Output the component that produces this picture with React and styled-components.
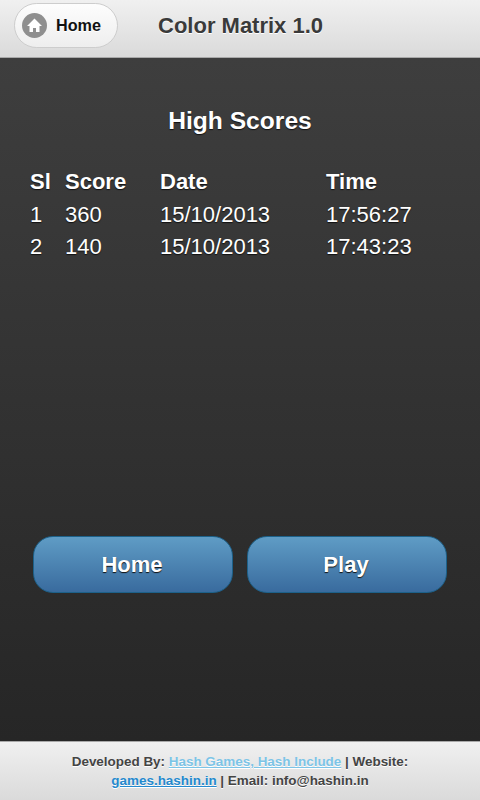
import React from "react";
import styled, { createGlobalStyle } from "styled-components";

const Global = createGlobalStyle`
  html, body { margin: 0; padding: 0; height: 100%; }
  body { font-family: "Liberation Sans", Arial, sans-serif; }
  #root { height: 100%; }
`;

const Page = styled.div`
  display: flex;
  flex-direction: column;
  width: 480px;
  height: 800px;
  overflow: hidden;
`;

const Header = styled.header`
  box-sizing: border-box;
  height: 58px;
  display: flex;
  align-items: center;
  padding: 0 0 7px 14px;
  background: linear-gradient(#f0f0f0, #dadada);
  border-bottom: 1px solid #a9a9a9;
`;

const BackButton = styled.a`
  box-sizing: border-box;
  width: 104px;
  height: 45px;
  display: flex;
  align-items: center;
  gap: 9px;
  padding-left: 7px;
  border: 1px solid #cdcdcd;
  border-radius: 23px;
  background: linear-gradient(#fdfdfd, #eeeeee);
  color: #111;
  font-size: 16.2px;
  font-weight: bold;
  text-shadow: 0 1px 0 #fff;
`;

const IconDisc = styled.span`
  width: 25px;
  height: 25px;
  border-radius: 50%;
  background: #8f8f8f;
  display: flex;
  align-items: center;
  justify-content: center;
`;

const Title = styled.h1`
  margin: 2px 0 0 40px;
  font-size: 22px;
  font-weight: bold;
  color: #3a3a3a;
  text-shadow: 0 1px 0 #fff;
`;

const Main = styled.main`
  flex: 1;
  display: flex;
  flex-direction: column;
  background: linear-gradient(#3e3e3e, #262626);
  color: #fff;
  text-shadow: 0 1px 1px #111;
`;

const Heading = styled.h2`
  margin: 48px 0 0;
  text-align: center;
  font-size: 24.6px;
  line-height: 30px;
  font-weight: bold;
`;

const ScoreRow = styled.div`
  display: grid;
  grid-template-columns: 35px 95px 166px 1fr;
  padding-left: 30px;
  height: 32px;
  line-height: 32px;
  font-size: 22px;
  font-weight: ${(p) => (p.$head ? "bold" : "normal")};
  margin-top: ${(p) => (p.$head ? "30px" : "0")};
  margin-bottom: ${(p) => (p.$head ? "1px" : "0")};
`;

const Actions = styled.div`
  display: flex;
  gap: 14px;
  padding-left: 33px;
  margin-top: 273px;
`;

const ActionButton = styled.button`
  box-sizing: border-box;
  width: 200px;
  height: 57px;
  padding: 0 2px 0 0;
  border: 1px solid #1d6189;
  border-radius: 20px;
  background: linear-gradient(#5f9cc5, #396b9e);
  color: #fff;
  font-family: inherit;
  font-size: 22px;
  font-weight: bold;
  text-shadow: 0 1px 1px #111;
`;

const Footer = styled.footer`
  box-sizing: border-box;
  height: 59px;
  padding: 10px 20px 0;
  background: linear-gradient(#f0f0f0, #dadada);
  border-top: 1px solid #a9a9a9;
  text-align: center;
  font-size: 13.44px;
  line-height: 19px;
  font-weight: bold;
  color: #444;
  text-shadow: 0 1px 0 #fff;
`;

const FooterLink = styled.a`
  color: ${(p) => (p.$light ? "#7cc4e7" : "#2489ce")};
  text-decoration: underline;
`;

const scores = [
  { sl: "1", score: "360", date: "15/10/2013", time: "17:56:27" },
  { sl: "2", score: "140", date: "15/10/2013", time: "17:43:23" },
];

export default function App() {
  return (
    <Page>
      <Global />
      <Header>
        <BackButton>
          <IconDisc>
            <svg width="17" height="17" viewBox="0 0 17 17">
              <path d="M8.5 1.5 L16 9 H13.5 V15 H10 V11 H7 V15 H3.5 V9 H1 Z" fill="#fff" />
            </svg>
          </IconDisc>
          Home
        </BackButton>
        <Title>Color Matrix 1.0</Title>
      </Header>
      <Main>
        <Heading>High Scores</Heading>
        <ScoreRow $head>
          <span>Sl</span>
          <span>Score</span>
          <span>Date</span>
          <span>Time</span>
        </ScoreRow>
        {scores.map((s) => (
          <ScoreRow key={s.sl}>
            <span>{s.sl}</span>
            <span>{s.score}</span>
            <span>{s.date}</span>
            <span>{s.time}</span>
          </ScoreRow>
        ))}
        <Actions>
          <ActionButton>Home</ActionButton>
          <ActionButton>Play</ActionButton>
        </Actions>
      </Main>
      <Footer>
        Developed By: <FooterLink $light>Hash Games, Hash Include</FooterLink> | Website:{" "}
        <FooterLink>games.hashin.in</FooterLink> | Email: info@hashin.in
      </Footer>
    </Page>
  );
}
